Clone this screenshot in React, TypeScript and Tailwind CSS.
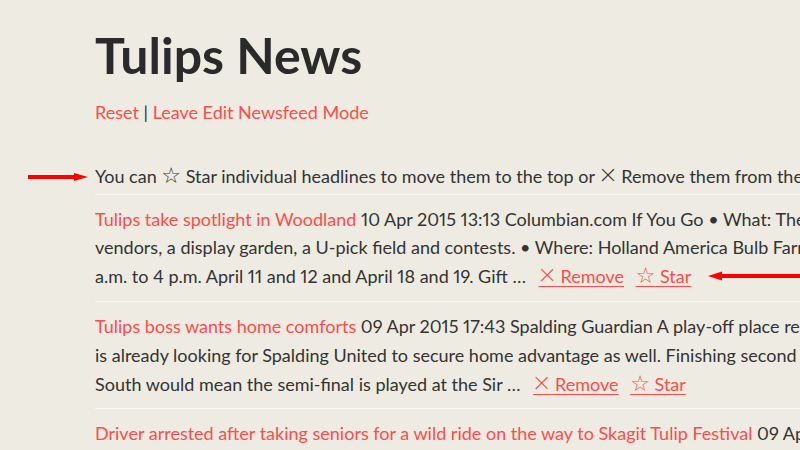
import React from "react";

type Item = {
  title: string;
  date: string;
  source: string;
  body: string;
};

// parts wrapped in {braces} are kept on one line
const items: Item[] = [
  {
    title: "Tulips take spotlight in Woodland",
    date: "10 Apr 2015 13:13",
    source: "Columbian.com",
    body:
      "If You Go • What: The Woodland Tulip Festival features food {vendors, a} display garden, a U-pick field and contests. • Where: Holland America Bulb Farms, Pekin Road, Woodland. • When: 9 {a.m. to 4 p.m.} April 11 and 12 and April 18 and 19. Gift …",
  },
  {
    title: "Tulips boss wants home comforts",
    date: "09 Apr 2015 17:43",
    source: "Spalding Guardian",
    body:
      "A play-off place remains in the balance but Chris Rawlinson {is already} looking for Spalding United to secure home advantage as well. Finishing second or third in the Evo-Stik Division One {South would} mean the semi-final is played at the Sir …",
  },
  {
    title: "Driver arrested after taking seniors for a wild ride on the way to Skagit Tulip Festival",
    date: "09 Apr 2015 09:12",
    source: "KING5.com",
    body:
      "A bus driver was arrested after taking a group of seniors on a wild ride to the tulip fields near Mount Vernon, police said. Passengers called 911 when the driver began swerving across lanes on …",
  },
];

const Star = () => (
  <span className="font-['DejaVu_Sans',sans-serif] text-[22px] leading-[0]">☆</span>
);

const Cross = () => <span className="relative top-[2px] text-[30px] font-light leading-[0]">×</span>;

function Body({ text }: { text: string }) {
  return (
    <>
      {text.split(/(\{[^}]+\})/).map((part, i) =>
        part.startsWith("{") ? (
          <span key={i} className="whitespace-nowrap">
            {part.slice(1, -1)}
          </span>
        ) : (
          part
        ),
      )}
    </>
  );
}

function NewsItem({ item }: { item: Item }) {
  return (
    <li className="border-t border-[#f8f7f1] py-[10px]">
      <a className="text-[#ff4b4b]">{item.title}</a> {item.date} {item.source} <Body text={item.body} />{" "}
      <a className="ml-[8px] text-[#ff4b4b] underline underline-offset-[3px]">
        <Cross /> Remove
      </a>{" "}
      <a className="ml-[7px] text-[#ff4b4b] underline underline-offset-[3px]">
        <Star /> Star
      </a>
    </li>
  );
}

export default function App() {
  return (
    <div className="w-full h-screen overflow-hidden bg-[#eeece2]">
      <div className="relative w-[1200px] pl-[95px] pt-[28px] font-['Lato','Noto_Sans','DejaVu_Sans',sans-serif] text-[18px] leading-[1.6] text-[#333] proportional-nums">
        <h1 className="text-[50px] font-bold leading-[1.1] text-[#2a2a2a]">Tulips News</h1>
        <p className="mt-[15px]">
          <a className="text-[#ff4b4b]">Reset</a> | <a className="text-[#ff4b4b]">Leave Edit Newsfeed Mode</a>
        </p>
        <div className="w-[1050px]">
          <p className="mt-[35px] pb-[3px]">
            You can <Star /> Star individual headlines to move them to the top or <Cross /> Remove them from the feed.
          </p>
          <ul>
            {items.map((item) => (
              <NewsItem key={item.title} item={item} />
            ))}
          </ul>
        </div>

        <svg className="absolute left-[28px] top-[170px]" width="60" height="14" viewBox="0 0 60 14">
          <path d="M0 7 H48" stroke="#ff0000" strokeWidth="4" />
          <path d="M46 3 L60 7 L46 11 Z" fill="#ff0000" />
        </svg>
        <svg className="absolute left-[708px] top-[269px]" width="100" height="14" viewBox="0 0 100 14">
          <path d="M12 7 H100" stroke="#ff0000" strokeWidth="4" />
          <path d="M14 2.5 L0 7 L14 11.5 Z" fill="#ff0000" />
        </svg>
      </div>
    </div>
  );
}
